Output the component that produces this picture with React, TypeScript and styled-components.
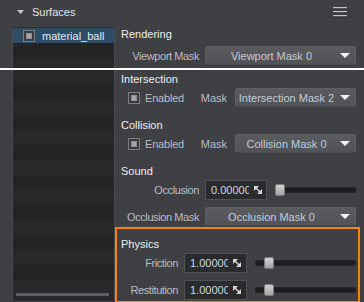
import React from "react";
import styled, { createGlobalStyle } from "styled-components";

const GlobalStyle = createGlobalStyle`
  html, body {
    margin: 0;
    padding: 0;
    background: #3f4043;
  }
  body {
    font-family: "Liberation Sans", Arial, sans-serif;
    font-size: 11px;
  }
`;

const Page = styled.div`
  width: 364px;
  height: 302px;
  overflow: hidden;
  background: #3f4043;
  color: #dcdcdc;
  display: flex;
  flex-direction: column;
`;

const Header = styled.div`
  height: 27px;
  box-sizing: border-box;
  padding: 0 17px 3px 17px;
  display: flex;
  align-items: center;
  flex-shrink: 0;

  .title {
    margin-left: 8px;
    color: #e2e2e2;
    flex: 1;
  }
`;

const Band = styled.div<{ $height: number }>`
  height: ${(p) => p.$height}px;
  display: flex;
  flex-shrink: 0;
`;

const Divider = styled.div`
  height: 2px;
  background: #ffffff;
  flex-shrink: 0;
`;

const ListPane = styled.div<{ $part: "top" | "bottom" }>`
  width: 103px;
  margin-left: 12px;
  box-sizing: border-box;
  align-self: flex-start;
  height: ${(p) => (p.$part === "top" ? "41px" : "231px")};
  border: 1px solid #4a4b4f;
  border-top-color: ${(p) => (p.$part === "top" ? "#2c2d30" : "transparent")};
  border-bottom-color: ${(p) => (p.$part === "bottom" ? "#2c2d30" : "transparent")};
  border-top-width: ${(p) => (p.$part === "top" ? "1px" : "0")};
  border-bottom-width: ${(p) => (p.$part === "bottom" ? "1px" : "0")};
  background: #28292b;
  display: flex;
  flex-direction: column;
  overflow: hidden;
`;

const ListRows = styled.div`
  flex: 1;
  overflow: hidden;
`;

const ListRow = styled.div<{ $tone: "sel" | "dark" | "light" }>`
  height: 15px;
  display: flex;
  align-items: center;
  padding-left: 10px;
  background: ${(p) =>
    p.$tone === "sel" ? "#2c4d65" : p.$tone === "dark" ? "#232426" : "#28292b"};
  color: #e4e8ee;

  span {
    margin-left: 7px;
  }
`;

const ScrollTrack = styled.div`
  height: 8px;
  display: flex;
  align-items: flex-start;
  padding: 1px 5px 0 3px;
  box-sizing: border-box;

  div {
    flex: 1;
    height: 3px;
    background: #5c5d60;
  }
`;

const Inspector = styled.div`
  flex: 1;
  display: flex;
  flex-direction: column;
  min-width: 0;
`;

const Section = styled.div<{ $top: number; $highlight?: boolean }>`
  margin-top: ${(p) => p.$top}px;
  padding: ${(p) => (p.$highlight ? "8px 2px 1px 4px" : "0 8px 0 6px")};
  margin-right: ${(p) => (p.$highlight ? "4px" : "0")};
  border: ${(p) => (p.$highlight ? "2px solid #f7840f" : "none")};
`;

const SectionTitle = styled.div`
  height: 14px;
  line-height: 14px;
  color: #eeeeee;
`;

const Rows = styled.div<{ $top: number }>`
  margin-top: ${(p) => p.$top}px;
  padding-left: 6px;
  display: flex;
  flex-direction: column;
  gap: 7px;
`;

const FieldRow = styled.div<{ $labelWidth: number }>`
  display: grid;
  grid-template-columns: ${(p) => p.$labelWidth}px 1fr;
  column-gap: 6px;
  align-items: center;
`;

const Label = styled.div`
  text-align: right;
  color: #b9bdc6;
  white-space: nowrap;
  letter-spacing: -0.4px;
`;

const ToggleRow = styled.div`
  display: flex;
  align-items: center;
  height: 19px;
  padding-left: 1px;

  .enabled {
    margin-left: 5px;
    color: #b9bdc6;
    flex: 1;
    letter-spacing: -0.2px;
  }

  .mask {
    color: #b9bdc6;
    margin-right: 8px;
  }
`;

const Dropdown = styled.div<{ $width?: number }>`
  height: 19px;
  width: ${(p) => (p.$width ? `${p.$width}px` : "auto")};
  box-sizing: border-box;
  border: 1px solid #5f6064;
  border-bottom-color: #4a4b4e;
  border-radius: 3px;
  background: linear-gradient(#5a5b5f, #525357);
  display: flex;
  align-items: center;
  color: #c4cbd8;

  .text {
    flex: 1;
    text-align: center;
    white-space: nowrap;
    overflow: hidden;
  }

  svg {
    margin: 0 5px 0 3px;
    flex-shrink: 0;
  }
`;

const Box = styled.div`
  width: 12px;
  height: 12px;
  box-sizing: border-box;
  border: 1px solid #7c7d81;
  background: #3b3c3f;
  padding: 2px;
  flex-shrink: 0;

  div {
    width: 100%;
    height: 100%;
    box-sizing: border-box;
    border: 1px solid #8e8f92;
    background: #a6a7aa;
  }
`;

const ValueGroup = styled.div`
  display: flex;
  align-items: center;
  gap: 8px;
`;

const NumberInput = styled.div<{ $width: number }>`
  width: ${(p) => p.$width}px;
  height: 20px;
  box-sizing: border-box;
  border: 1px solid #505155;
  background: #2a2b2d;
  display: flex;
  align-items: center;
  flex-shrink: 0;
  color: #cdd7e5;

  .val {
    width: 38px;
    margin-left: 5px;
    overflow: hidden;
    white-space: nowrap;
  }

  svg {
    margin-left: 5px;
  }
`;

const Slider = styled.div`
  flex: 1;
  height: 12px;
  position: relative;
  display: flex;
  align-items: center;
`;

const SliderTrack = styled.div`
  flex: 1;
  height: 6px;
  border-radius: 3px;
  background: #1c1d1f;
  box-shadow: inset 0 0 0 1px #252628;
`;

const SliderThumb = styled.div`
  position: absolute;
  top: 0;
  width: 10px;
  height: 12px;
  box-sizing: border-box;
  border: 1px solid #7c7d80;
  border-radius: 2px;
  background: linear-gradient(#d2d2d2, #a3a3a3);
`;

const Arrow = () => (
  <svg width="10" height="5" viewBox="0 0 10 5">
    <polygon points="0,0 10,0 5,5" fill="#f2f2f2" />
  </svg>
);

const DragIcon = () => (
  <svg width="8" height="8" viewBox="0 0 8 8">
    <polygon points="0,0 5,0 0,5" fill="#d6d6d6" />
    <polygon points="8,8 8,3 3,8" fill="#d6d6d6" />
    <line x1="1" y1="1" x2="7" y2="7" stroke="#d6d6d6" strokeWidth="1.4" />
  </svg>
);

const CheckBox = () => (
  <Box>
    <div />
  </Box>
);

const Select = ({ value, width }: { value: string; width?: number }) => (
  <Dropdown $width={width}>
    <span className="text">{value}</span>
    <Arrow />
  </Dropdown>
);

const ValueSlider = ({
  value,
  inputWidth,
  percent,
}: {
  value: string;
  inputWidth: number;
  percent: number;
}) => (
  <ValueGroup>
    <NumberInput $width={inputWidth}>
      <span className="val">{value}</span>
      <DragIcon />
    </NumberInput>
    <Slider>
      <SliderTrack />
      <SliderThumb style={{ left: `calc((100% - 10px) * ${percent})` }} />
    </Slider>
  </ValueGroup>
);

const topRows: ("sel" | "dark" | "light")[] = ["sel", "dark", "light"];
const bottomRows = Array.from({ length: 15 }, (_, i) => (i % 2 === 0 ? "light" : "dark")) as (
  | "dark"
  | "light"
)[];

export default function App() {
  return (
    <Page>
      <GlobalStyle />
      <Header>
        <svg width="7" height="4" viewBox="0 0 7 4">
          <polygon points="0,0 7,0 3.5,4" fill="#c9c9c9" />
        </svg>
        <span className="title">Surfaces</span>
        <svg width="14" height="11" viewBox="0 0 14 11">
          {[0, 4, 8].map((y) => (
            <g key={y}>
              <rect x="0" y={y} width="14" height="1.5" fill="#c2c2c2" />
              <rect x="0" y={y + 1.5} width="14" height="1" fill="#2b2c2e" />
            </g>
          ))}
        </svg>
      </Header>

      <Band $height={41}>
        <ListPane $part="top">
          <ListRows>
            {topRows.map((tone, i) => (
              <ListRow key={i} $tone={tone}>
                {tone === "sel" && (
                  <>
                    <CheckBox />
                    <span>material_ball</span>
                  </>
                )}
              </ListRow>
            ))}
          </ListRows>
        </ListPane>
        <Inspector>
          <Section $top={0}>
            <SectionTitle>Rendering</SectionTitle>
            <Rows $top={5}>
              <FieldRow $labelWidth={72}>
                <Label>Viewport Mask</Label>
                <Select value="Viewport Mask 0" />
              </FieldRow>
            </Rows>
          </Section>
        </Inspector>
      </Band>

      <Divider />

      <Band $height={232}>
        <ListPane $part="bottom">
          <ListRows>
            {bottomRows.map((tone, i) => (
              <ListRow key={i} $tone={tone} />
            ))}
          </ListRows>
          <ScrollTrack>
            <div />
          </ScrollTrack>
        </ListPane>
        <Inspector>
          <Section $top={2}>
            <SectionTitle>Intersection</SectionTitle>
            <Rows $top={2}>
              <ToggleRow>
                <CheckBox />
                <span className="enabled">Enabled</span>
                <span className="mask">Mask</span>
                <Select value="Intersection Mask 2" width={121} />
              </ToggleRow>
            </Rows>
          </Section>
          <Section $top={11}>
            <SectionTitle>Collision</SectionTitle>
            <Rows $top={2}>
              <ToggleRow>
                <CheckBox />
                <span className="enabled">Enabled</span>
                <span className="mask">Mask</span>
                <Select value="Collision Mask 0" width={121} />
              </ToggleRow>
            </Rows>
          </Section>
          <Section $top={11}>
            <SectionTitle>Sound</SectionTitle>
            <Rows $top={2}>
              <FieldRow $labelWidth={72}>
                <Label>Occlusion</Label>
                <ValueSlider value="0.000000" inputWidth={62} percent={0} />
              </FieldRow>
              <FieldRow $labelWidth={72}>
                <Label>Occlusion Mask</Label>
                <Select value="Occlusion Mask 0" />
              </FieldRow>
            </Rows>
          </Section>
          <Section $top={1} $highlight>
            <SectionTitle>Physics</SectionTitle>
            <Rows $top={2}>
              <FieldRow $labelWidth={51}>
                <Label>Friction</Label>
                <ValueSlider value="1.000000" inputWidth={63} percent={0.1} />
              </FieldRow>
              <FieldRow $labelWidth={51}>
                <Label>Restitution</Label>
                <ValueSlider value="1.000000" inputWidth={63} percent={0.1} />
              </FieldRow>
            </Rows>
          </Section>
        </Inspector>
      </Band>
    </Page>
  );
}
